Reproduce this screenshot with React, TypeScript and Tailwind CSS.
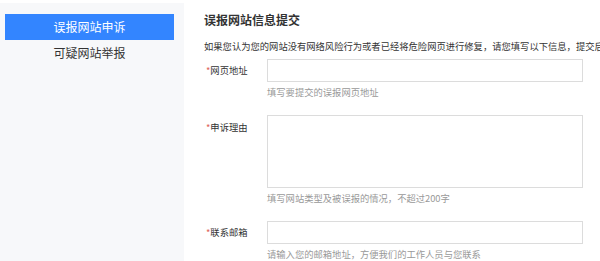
import React from "react";

const fields = [
  { label: "网页地址", hint: "填写要提交的误报网页地址", type: "input" },
  { label: "申诉理由", hint: "填写网站类型及被误报的情况，不超过200字", type: "textarea" },
  { label: "联系邮箱", hint: "请输入您的邮箱地址，方便我们的工作人员与您联系", type: "input" },
];

function Sidebar() {
  return (
    <aside className="w-[184px] shrink-0 bg-[#f7f8fa] pl-[5px] pr-[10px] pt-[11px]">
      <div className="h-[26px] bg-[#3385ff] text-white text-[12px] leading-[26px] text-center">
        误报网站申诉
      </div>
      <div className="h-[26px] text-[#333] text-[12px] leading-[26px] text-center">
        可疑网站举报
      </div>
    </aside>
  );
}

function Field({ label, hint, type }: { label: string; hint: string; type: string }) {
  const isArea = type === "textarea";
  return (
    <div>
      <div className={`flex ${isArea ? "items-start" : "items-center"}`}>
        <label className={`w-[63px] shrink-0 pl-[2px] text-[9.3px] text-[#333] ${isArea ? "pt-[6px]" : ""}`}>
          <span className="text-[#e0675e]">*</span>
          {label}
        </label>
        {isArea ? (
          <textarea className="block w-[316px] h-[73px] border border-[#dcdcdc] bg-white resize-none outline-none" />
        ) : (
          <input className="block w-[316px] h-[23px] border border-[#dcdcdc] bg-white outline-none" />
        )}
      </div>
      <p className="mt-[4px] ml-[63px] text-[9.3px] leading-[12px] text-[#999]">{hint}</p>
    </div>
  );
}

export default function App() {
  return (
    <div
      className="w-[600px] h-[261px] overflow-hidden bg-white pt-[3px]"
      style={{ fontFamily: '"Noto Sans CJK SC", "Liberation Sans", sans-serif' }}
    >
      <div className="flex h-[258px]">
        <Sidebar />
        <main className="flex-1 min-w-0 pl-[20px] pt-[9px] whitespace-nowrap overflow-hidden">
          <h1 className="text-[12px] leading-[16px] font-bold text-[#333]">误报网站信息提交</h1>
          <p className="mt-[11px] text-[9.3px] leading-[14px] text-[#333]">
            如果您认为您的网站没有网络风险行为或者已经将危险网页进行修复，请您填写以下信息，提交后
          </p>
          <div className="mt-[6px] flex flex-col gap-[17px]">
            {fields.map((f) => (
              <Field key={f.label} {...f} />
            ))}
          </div>
        </main>
      </div>
    </div>
  );
}
